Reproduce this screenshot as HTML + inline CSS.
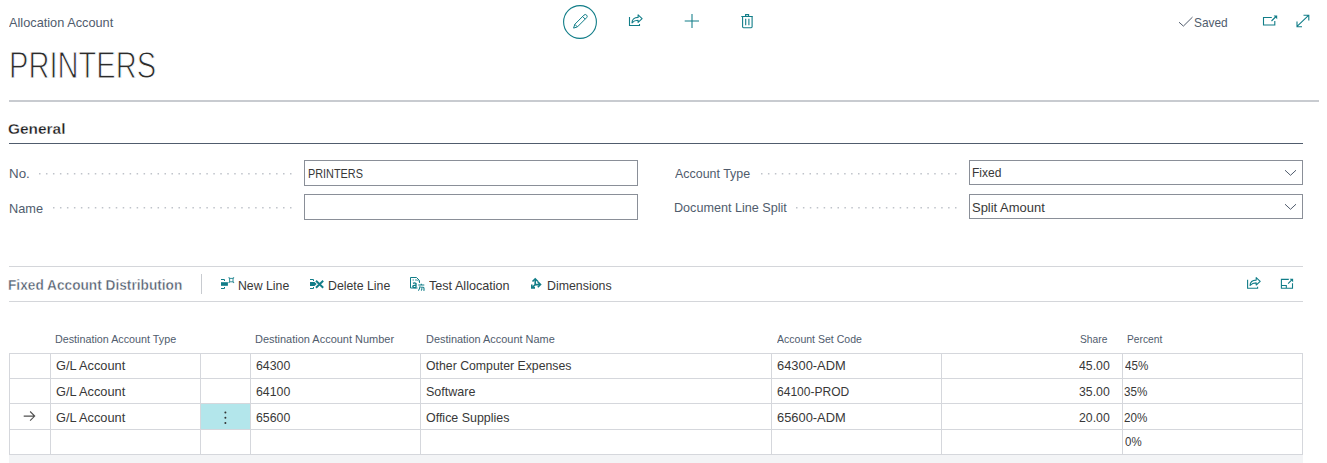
<!DOCTYPE html>
<html><head><meta charset="utf-8">
<style>
*{margin:0;padding:0;box-sizing:border-box}
html,body{width:1327px;height:463px;overflow:hidden;background:#fff;font-family:"Liberation Sans",sans-serif;color:#212121}
.t{position:absolute;white-space:nowrap;line-height:1;transform-origin:0 0}
.hl{position:absolute;height:1px}
.vl{position:absolute;width:1px}
.box{position:absolute;border:1px solid #8a8f98;background:#fff}
svg{position:absolute;left:0;top:0;overflow:visible}
</style></head><body>

<div class="hl" style="left:9px;top:100px;width:1310px;height:2px;background:#c8cbd0"></div>
<div class="hl" style="left:9px;top:143px;width:1294px;background:#505c6d"></div>

<div class="box" style="left:304px;top:160px;width:334px;height:26px"></div>
<div class="box" style="left:304px;top:194px;width:334px;height:26px"></div>
<div class="box" style="left:969px;top:160px;width:334px;height:25px"></div>
<div class="box" style="left:969px;top:194px;width:334px;height:25px"></div>

<div class="hl" style="left:9px;top:266px;width:1294px;background:#d4d6da"></div>
<div class="hl" style="left:9px;top:301px;width:1294px;background:#d4d6da"></div>
<div class="vl" style="left:201px;top:274px;height:20px;background:#c8cbd0"></div>

<div style="position:absolute;left:201px;top:404px;width:49px;height:25px;background:#b3e6eb"></div>
<div class="hl" style="left:9px;top:353px;width:1294px;background:#d5d7dc"></div>
<div class="hl" style="left:9px;top:378px;width:1294px;background:#d5d7dc"></div>
<div class="hl" style="left:9px;top:403px;width:1294px;background:#d5d7dc"></div>
<div class="hl" style="left:9px;top:429px;width:1294px;background:#d5d7dc"></div>
<div class="hl" style="left:9px;top:454px;width:1294px;background:#d5d7dc"></div>
<div class="vl" style="left:9px;top:353px;height:102px;background:#d5d7dc"></div>
<div class="vl" style="left:50px;top:353px;height:102px;background:#d5d7dc"></div>
<div class="vl" style="left:200px;top:353px;height:102px;background:#d5d7dc"></div>
<div class="vl" style="left:250px;top:353px;height:102px;background:#d5d7dc"></div>
<div class="vl" style="left:420px;top:353px;height:102px;background:#d5d7dc"></div>
<div class="vl" style="left:771px;top:353px;height:102px;background:#d5d7dc"></div>
<div class="vl" style="left:941px;top:353px;height:102px;background:#d5d7dc"></div>
<div class="vl" style="left:1122px;top:353px;height:102px;background:#d5d7dc"></div>
<div class="vl" style="left:1302px;top:353px;height:102px;background:#d5d7dc"></div>
<div style="position:absolute;left:9px;top:455px;width:1294px;height:8px;background:#f3f4f6"></div>

<div class="t" style="left:9.00px;top:16px;font-size:13px;font-weight:400;color:#505c6d;transform:scaleX(0.9811);">Allocation Account</div>
<div class="t" style="left:9.11px;top:48px;font-size:36.5px;font-weight:400;color:#2b2b2b;transform:scaleX(0.7967);-webkit-text-stroke:1px #fff">PRINTERS</div>
<div class="t" style="left:1193.99px;top:16px;font-size:13px;font-weight:400;color:#505c6d;transform:scaleX(0.9143);">Saved</div>
<div class="t" style="left:8.04px;top:121px;font-size:15px;font-weight:700;color:#1c1c1c;transform:scaleX(1.0283);-webkit-text-stroke:0.3px #fff">General</div>
<div class="t" style="left:8.67px;top:167px;font-size:13px;font-weight:400;color:#505c6d;transform:scaleX(1.0278);">No.</div>
<div class="t" style="left:8.72px;top:202px;font-size:13px;font-weight:400;color:#505c6d;transform:scaleX(0.9818);">Name</div>
<div class="t" style="left:308.06px;top:167px;font-size:13px;font-weight:400;color:#383838;transform:scaleX(0.8359);">PRINTERS</div>
<div class="t" style="left:674.60px;top:167px;font-size:13px;font-weight:400;color:#505c6d;transform:scaleX(0.9564);">Account Type</div>
<div class="t" style="left:673.63px;top:201px;font-size:13px;font-weight:400;color:#505c6d;transform:scaleX(0.9696);">Document Line Split</div>
<div class="t" style="left:972.27px;top:166px;font-size:13px;font-weight:400;color:#383838;transform:scaleX(0.9267);">Fixed</div>
<div class="t" style="left:972.00px;top:201px;font-size:13px;font-weight:400;color:#383838;transform:scaleX(0.9972);">Split Amount</div>
<div class="t" style="left:8.02px;top:278px;font-size:14px;font-weight:700;color:#505c6d;transform:scaleX(0.9774);-webkit-text-stroke:0.4px #fff">Fixed Account Distribution</div>
<div class="t" style="left:238.25px;top:279px;font-size:13px;font-weight:400;color:#383838;transform:scaleX(0.9453);">New Line</div>
<div class="t" style="left:327.85px;top:279px;font-size:13px;font-weight:400;color:#383838;transform:scaleX(0.9469);">Delete Line</div>
<div class="t" style="left:428.60px;top:279px;font-size:13px;font-weight:400;color:#383838;transform:scaleX(0.9695);">Test Allocation</div>
<div class="t" style="left:546.55px;top:279px;font-size:13px;font-weight:400;color:#383838;transform:scaleX(0.9507);">Dimensions</div>
<div class="t" style="left:54.82px;top:334px;font-size:11px;font-weight:400;color:#505c6d;transform:scaleX(0.9772);">Destination Account Type</div>
<div class="t" style="left:255.10px;top:334px;font-size:11px;font-weight:400;color:#505c6d;transform:scaleX(0.9978);">Destination Account Number</div>
<div class="t" style="left:425.51px;top:334px;font-size:11px;font-weight:400;color:#505c6d;transform:scaleX(0.9930);">Destination Account Name</div>
<div class="t" style="left:777.00px;top:334px;font-size:11px;font-weight:400;color:#505c6d;transform:scaleX(0.9568);">Account Set Code</div>
<div class="t" style="left:1079.87px;top:334px;font-size:11px;font-weight:400;color:#505c6d;transform:scaleX(0.9321);">Share</div>
<div class="t" style="left:1126.67px;top:334px;font-size:11px;font-weight:400;color:#505c6d;transform:scaleX(0.9297);">Percent</div>
<div class="t" style="left:55.52px;top:359px;font-size:13px;font-weight:400;color:#383838;transform:scaleX(0.9841);">G/L Account</div>
<div class="t" style="left:255.55px;top:359px;font-size:13px;font-weight:400;color:#383838;transform:scaleX(0.9486);">64300</div>
<div class="t" style="left:425.85px;top:359px;font-size:13px;font-weight:400;color:#383838;transform:scaleX(0.9451);">Other Computer Expenses</div>
<div class="t" style="left:425.84px;top:385px;font-size:13px;font-weight:400;color:#383838;transform:scaleX(0.9640);">Software</div>
<div class="t" style="left:425.84px;top:411px;font-size:13px;font-weight:400;color:#383838;transform:scaleX(0.9570);">Office Supplies</div>
<div class="t" style="left:776.81px;top:359px;font-size:13px;font-weight:400;color:#383838;transform:scaleX(0.9910);">64300-ADM</div>
<div class="t" style="left:776.87px;top:385px;font-size:13px;font-weight:400;color:#383838;transform:scaleX(0.9260);">64100-PROD</div>
<div class="t" style="left:1079.00px;top:359px;font-size:13px;font-weight:400;color:#383838;transform:scaleX(0.9438);">45.00</div>
<div class="t" style="left:1124.80px;top:359px;font-size:13px;font-weight:400;color:#383838;transform:scaleX(0.8962);">45%</div>
<div class="t" style="left:1124.80px;top:435px;font-size:13px;font-weight:400;color:#383838;transform:scaleX(0.8842);">0%</div>
<div class="t" style="left:55.52px;top:385px;font-size:13px;font-weight:400;color:#383838;transform:scaleX(0.9841);">G/L Account</div>
<div class="t" style="left:55.52px;top:411px;font-size:13px;font-weight:400;color:#383838;transform:scaleX(0.9841);">G/L Account</div>
<div class="t" style="left:255.55px;top:385px;font-size:13px;font-weight:400;color:#383838;transform:scaleX(0.9486);">64100</div>
<div class="t" style="left:255.55px;top:411px;font-size:13px;font-weight:400;color:#383838;transform:scaleX(0.9486);">65600</div>
<div class="t" style="left:776.81px;top:411px;font-size:13px;font-weight:400;color:#383838;transform:scaleX(0.9910);">65600-ADM</div>
<div class="t" style="left:1079.00px;top:385px;font-size:13px;font-weight:400;color:#383838;transform:scaleX(0.9438);">35.00</div>
<div class="t" style="left:1079.00px;top:411px;font-size:13px;font-weight:400;color:#383838;transform:scaleX(0.9438);">20.00</div>
<div class="t" style="left:1123.90px;top:385px;font-size:13px;font-weight:400;color:#383838;transform:scaleX(0.8962);">35%</div>
<div class="t" style="left:1123.90px;top:411px;font-size:13px;font-weight:400;color:#383838;transform:scaleX(0.8962);">20%</div>

<svg width="1327" height="463">
<g fill="#bfc3ca"><rect x="39.00" y="173" width="1.5" height="1.5"/><rect x="45.97" y="173" width="1.5" height="1.5"/><rect x="52.94" y="173" width="1.5" height="1.5"/><rect x="59.92" y="173" width="1.5" height="1.5"/><rect x="66.89" y="173" width="1.5" height="1.5"/><rect x="73.86" y="173" width="1.5" height="1.5"/><rect x="80.83" y="173" width="1.5" height="1.5"/><rect x="87.81" y="173" width="1.5" height="1.5"/><rect x="94.78" y="173" width="1.5" height="1.5"/><rect x="101.75" y="173" width="1.5" height="1.5"/><rect x="108.72" y="173" width="1.5" height="1.5"/><rect x="115.69" y="173" width="1.5" height="1.5"/><rect x="122.67" y="173" width="1.5" height="1.5"/><rect x="129.64" y="173" width="1.5" height="1.5"/><rect x="136.61" y="173" width="1.5" height="1.5"/><rect x="143.58" y="173" width="1.5" height="1.5"/><rect x="150.56" y="173" width="1.5" height="1.5"/><rect x="157.53" y="173" width="1.5" height="1.5"/><rect x="164.50" y="173" width="1.5" height="1.5"/><rect x="171.47" y="173" width="1.5" height="1.5"/><rect x="178.44" y="173" width="1.5" height="1.5"/><rect x="185.42" y="173" width="1.5" height="1.5"/><rect x="192.39" y="173" width="1.5" height="1.5"/><rect x="199.36" y="173" width="1.5" height="1.5"/><rect x="206.33" y="173" width="1.5" height="1.5"/><rect x="213.31" y="173" width="1.5" height="1.5"/><rect x="220.28" y="173" width="1.5" height="1.5"/><rect x="227.25" y="173" width="1.5" height="1.5"/><rect x="234.22" y="173" width="1.5" height="1.5"/><rect x="241.19" y="173" width="1.5" height="1.5"/><rect x="248.17" y="173" width="1.5" height="1.5"/><rect x="255.14" y="173" width="1.5" height="1.5"/><rect x="262.11" y="173" width="1.5" height="1.5"/><rect x="269.08" y="173" width="1.5" height="1.5"/><rect x="276.06" y="173" width="1.5" height="1.5"/><rect x="283.03" y="173" width="1.5" height="1.5"/><rect x="290.00" y="173" width="1.5" height="1.5"/><rect x="53.00" y="207" width="1.5" height="1.5"/><rect x="59.97" y="207" width="1.5" height="1.5"/><rect x="66.94" y="207" width="1.5" height="1.5"/><rect x="73.91" y="207" width="1.5" height="1.5"/><rect x="80.88" y="207" width="1.5" height="1.5"/><rect x="87.85" y="207" width="1.5" height="1.5"/><rect x="94.82" y="207" width="1.5" height="1.5"/><rect x="101.79" y="207" width="1.5" height="1.5"/><rect x="108.76" y="207" width="1.5" height="1.5"/><rect x="115.74" y="207" width="1.5" height="1.5"/><rect x="122.71" y="207" width="1.5" height="1.5"/><rect x="129.68" y="207" width="1.5" height="1.5"/><rect x="136.65" y="207" width="1.5" height="1.5"/><rect x="143.62" y="207" width="1.5" height="1.5"/><rect x="150.59" y="207" width="1.5" height="1.5"/><rect x="157.56" y="207" width="1.5" height="1.5"/><rect x="164.53" y="207" width="1.5" height="1.5"/><rect x="171.50" y="207" width="1.5" height="1.5"/><rect x="178.47" y="207" width="1.5" height="1.5"/><rect x="185.44" y="207" width="1.5" height="1.5"/><rect x="192.41" y="207" width="1.5" height="1.5"/><rect x="199.38" y="207" width="1.5" height="1.5"/><rect x="206.35" y="207" width="1.5" height="1.5"/><rect x="213.32" y="207" width="1.5" height="1.5"/><rect x="220.29" y="207" width="1.5" height="1.5"/><rect x="227.26" y="207" width="1.5" height="1.5"/><rect x="234.24" y="207" width="1.5" height="1.5"/><rect x="241.21" y="207" width="1.5" height="1.5"/><rect x="248.18" y="207" width="1.5" height="1.5"/><rect x="255.15" y="207" width="1.5" height="1.5"/><rect x="262.12" y="207" width="1.5" height="1.5"/><rect x="269.09" y="207" width="1.5" height="1.5"/><rect x="276.06" y="207" width="1.5" height="1.5"/><rect x="283.03" y="207" width="1.5" height="1.5"/><rect x="290.00" y="207" width="1.5" height="1.5"/><rect x="761.00" y="173" width="1.5" height="1.5"/><rect x="767.93" y="173" width="1.5" height="1.5"/><rect x="774.86" y="173" width="1.5" height="1.5"/><rect x="781.79" y="173" width="1.5" height="1.5"/><rect x="788.71" y="173" width="1.5" height="1.5"/><rect x="795.64" y="173" width="1.5" height="1.5"/><rect x="802.57" y="173" width="1.5" height="1.5"/><rect x="809.50" y="173" width="1.5" height="1.5"/><rect x="816.43" y="173" width="1.5" height="1.5"/><rect x="823.36" y="173" width="1.5" height="1.5"/><rect x="830.29" y="173" width="1.5" height="1.5"/><rect x="837.21" y="173" width="1.5" height="1.5"/><rect x="844.14" y="173" width="1.5" height="1.5"/><rect x="851.07" y="173" width="1.5" height="1.5"/><rect x="858.00" y="173" width="1.5" height="1.5"/><rect x="864.93" y="173" width="1.5" height="1.5"/><rect x="871.86" y="173" width="1.5" height="1.5"/><rect x="878.79" y="173" width="1.5" height="1.5"/><rect x="885.71" y="173" width="1.5" height="1.5"/><rect x="892.64" y="173" width="1.5" height="1.5"/><rect x="899.57" y="173" width="1.5" height="1.5"/><rect x="906.50" y="173" width="1.5" height="1.5"/><rect x="913.43" y="173" width="1.5" height="1.5"/><rect x="920.36" y="173" width="1.5" height="1.5"/><rect x="927.29" y="173" width="1.5" height="1.5"/><rect x="934.21" y="173" width="1.5" height="1.5"/><rect x="941.14" y="173" width="1.5" height="1.5"/><rect x="948.07" y="173" width="1.5" height="1.5"/><rect x="955.00" y="173" width="1.5" height="1.5"/><rect x="796.00" y="207" width="1.5" height="1.5"/><rect x="802.91" y="207" width="1.5" height="1.5"/><rect x="809.83" y="207" width="1.5" height="1.5"/><rect x="816.74" y="207" width="1.5" height="1.5"/><rect x="823.65" y="207" width="1.5" height="1.5"/><rect x="830.57" y="207" width="1.5" height="1.5"/><rect x="837.48" y="207" width="1.5" height="1.5"/><rect x="844.39" y="207" width="1.5" height="1.5"/><rect x="851.30" y="207" width="1.5" height="1.5"/><rect x="858.22" y="207" width="1.5" height="1.5"/><rect x="865.13" y="207" width="1.5" height="1.5"/><rect x="872.04" y="207" width="1.5" height="1.5"/><rect x="878.96" y="207" width="1.5" height="1.5"/><rect x="885.87" y="207" width="1.5" height="1.5"/><rect x="892.78" y="207" width="1.5" height="1.5"/><rect x="899.70" y="207" width="1.5" height="1.5"/><rect x="906.61" y="207" width="1.5" height="1.5"/><rect x="913.52" y="207" width="1.5" height="1.5"/><rect x="920.43" y="207" width="1.5" height="1.5"/><rect x="927.35" y="207" width="1.5" height="1.5"/><rect x="934.26" y="207" width="1.5" height="1.5"/><rect x="941.17" y="207" width="1.5" height="1.5"/><rect x="948.09" y="207" width="1.5" height="1.5"/><rect x="955.00" y="207" width="1.5" height="1.5"/></g>
<g fill="none" stroke="#117d88" stroke-width="1.1">
<circle cx="580" cy="22" r="16.4"/>
<path d="M574.4,23.7 L573.2,27.5 L577.0,26.3 L586.2,17.1 A1.8,1.8 0 0 0 583.6,14.5 Z M574.4,23.7 L577.0,26.3 M582.2,15.9 L584.8,18.5" stroke-linejoin="round" stroke-width="1" transform="translate(0.4,0.6)"/>
<path d="M629.5,17 V25.5 H639.5 V24" />
<path d="M632,22.8 C631.9,19.4 634.2,17.4 638.1,17.4 V14.9 L642.1,18.6 L638.1,22.3 V20.2 C635.3,20.2 633.5,21 632,22.8 Z" stroke-linejoin="round"/>
<path d="M684.7,21 H699 M692,14 V28" stroke-width="1.05"/>
<path d="M741.3,16.5 H752.8 M745.6,16.5 V14.6 H748.6 V16.5 M742.6,16.5 V26.8 Q742.6,27.7 743.5,27.7 H751.2 Q752.1,27.7 752.1,26.8 V16.5 M745.7,18.8 V25.2 M748.9,18.8 V25.2"/>
<path d="M1271.8,17.5 H1263.5 V25 H1274.8 V21 M1271.5,21 L1276,16.5"/>
<path d="M1296.8,26.7 L1308.8,15.1 M1303.5,15.2 H1308.8 V20.5 M1297,21.5 V26.7 H1302"/>
<path d="M1285,170.2 L1290.5,175.3 L1296,170.2 M1285,204.2 L1290.5,209.3 L1296,204.2" stroke="#505c6d" stroke-width="1"/>
</g>
<path d="M1273.6,15.6 H1277.2 V19.2 Z" fill="#117d88"/>
<g transform="translate(618.1,262.7)" fill="none" stroke="#117d88" stroke-width="1.1">
<path d="M629.5,17 V25.5 H639.5 V24" />
<path d="M632,22.8 C631.9,19.4 634.2,17.4 638.1,17.4 V14.9 L642.1,18.6 L638.1,22.3 V20.2 C635.3,20.2 633.5,21 632,22.8 Z" stroke-linejoin="round"/>
</g>
<path d="M1288.8,279.4 H1281.4 V288.2 H1292.5 V283.3 M1281.4,285.5 H1286.3 V288.2 M1288.1,283.6 L1291.6,280.1" fill="none" stroke="#117d88" stroke-width="1.1"/>
<path d="M1289.6,278.8 H1293.1 V282.3 Z" fill="#117d88"/>
<g fill="none" stroke="#117d88" stroke-width="1">
<path d="M221,279.5 H224.5 V281 M221,288.5 H224.5 V287"/>
<rect x="229.6" y="278.4" width="3.4" height="3.4" stroke-opacity="0.85"/>
<path d="M228.6,277.4 L229.6,278.4 M234,277.4 L233,278.4 M228.6,282.8 L229.6,281.8 M234,282.8 L233,281.8" stroke-width="1.1" stroke-opacity="0.85"/>
<path d="M310,279.5 H313.5 V281 M310,288.5 H313.5 V287"/>
<path d="M316,280.8 L323.2,287.8 M323.2,280.8 L316,287.8" stroke-width="1.9"/>
<path d="M416.5,277.5 H410.5 V288 H417.5 M416.5,277.5 L419.5,280.5 V282.5"/>
<path d="M412.5,280 H414 M415,280 H417.5 L419,281.5 M419.5,282 V283" stroke-width="1" stroke-opacity="0.8"/>
<path d="M418.3,285 H424.3 M421.3,283.8 V285 M420,286.2 Q419.6,289.5 418.3,290.6 M420.6,287.2 H423.2 Q424,287.2 424,288.4 V290.4 M421.8,288.2 Q422.2,290 421,290.6 M423.5,290.4 H424.3" stroke-width="1.1"/>
<path d="M413,283.4 Q414.6,282.4 416,283.6 V287.6 M416,285.4 H414.2 Q412.8,285.4 412.8,286.5 Q412.8,287.6 414.2,287.6 H416" stroke-width="1.3"/>
</g>
<g fill="#117d88">
<rect x="221" y="282.2" width="6.9" height="3.6"/>
<path d="M310,282 H314.5 L316.6,284 L314.5,286 H310 Z"/>
</g>
<g fill="none" stroke="#117d88" stroke-width="1.8" stroke-linejoin="miter">
<path d="M535.2,279.5 V284.6 H540 M535.2,284.6 L532.3,287.5" stroke-width="1.6"/>
<path d="M532.5,281.5 L535.2,278.8 L537.9,281.5 M537.8,281.9 L540.5,284.6 L537.8,287.3 M531.8,284.6 V287.9 H535" stroke-width="1.6"/>
</g>
<path d="M23.7,416.1 H34.5 M30.1,411.5 L34.7,416.1 L30.1,420.7" fill="none" stroke="#505050" stroke-width="1.1"/>
<g fill="#333"><circle cx="225.4" cy="412.4" r="1"/><circle cx="225.4" cy="417.7" r="1"/><circle cx="225.4" cy="422.9" r="1"/></g>

<path d="M1179,22.2 L1183.4,26.1 L1192.5,17.1" fill="none" stroke="#505c6d" stroke-width="1"/>
</svg>

</body></html>
